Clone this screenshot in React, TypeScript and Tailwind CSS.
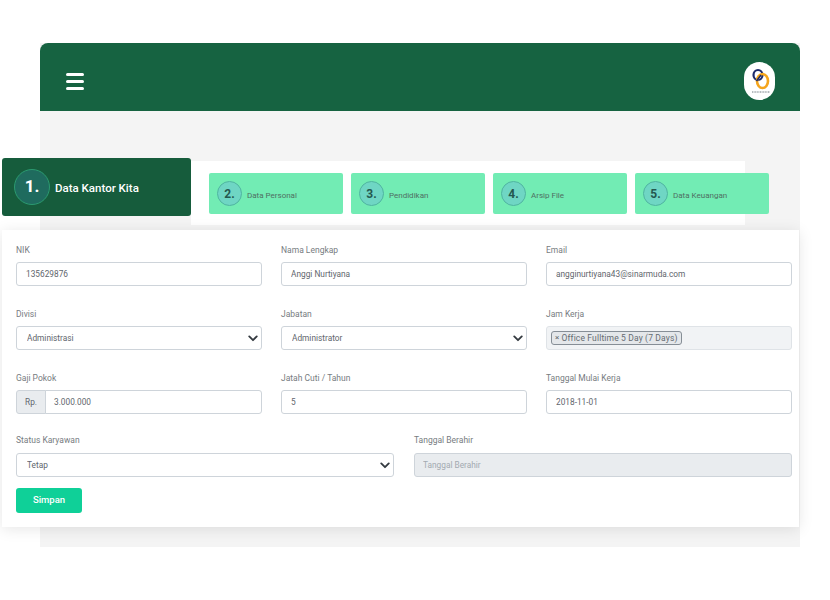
const FONT = "font-['Roboto','Liberation_Sans',sans-serif]";

const fieldClass =
  "block w-full h-6 rounded-[3px] border border-[#ced4da] bg-white px-[9px] text-[8.3px] text-[#5f666d] outline-none";

function Label({ children, tall }: { children: React.ReactNode; tall?: boolean }) {
  return (
    <label className={`block h-3 text-[8.5px] leading-3 text-[#777c81] ${tall ? "mb-[7px]" : "mb-[6px]"}`}>
      {children}
    </label>
  );
}

function TextField({ label, value }: { label: string; value: string }) {
  return (
    <div>
      <Label>{label}</Label>
      <input readOnly value={value} className={fieldClass} />
    </div>
  );
}

function SelectField({ label, value, tall }: { label: string; value: string; tall?: boolean }) {
  return (
    <div>
      <Label tall={tall}>{label}</Label>
      <div className="relative">
        <select className={`${fieldClass} appearance-none !px-[10px]`} defaultValue={value}>
          <option>{value}</option>
        </select>
        <svg
          viewBox="0 0 12 8"
          className="absolute right-[4px] top-[9px] h-[7px] w-[10px]"
          fill="none"
          stroke="#343a40"
          strokeWidth="2.2"
          strokeLinecap="round"
          strokeLinejoin="round"
        >
          <path d="M1.5 1.5 6 6l4.5-4.5" />
        </svg>
      </div>
    </div>
  );
}

function Logo() {
  return (
    <div className="flex h-[38px] w-[31px] items-center justify-center rounded-full bg-white">
      <svg viewBox="0 0 31 38" className="h-[38px] w-[31px]" fill="none">
        <ellipse cx="14" cy="13" rx="4.5" ry="5" stroke="#1c2a6b" strokeWidth="2.2" />
        <ellipse cx="18.5" cy="19" rx="5.5" ry="7" stroke="#f5a51c" strokeWidth="2.6" />
        <path d="M12.5 19l4.5-6" stroke="#1c2a6b" strokeWidth="1.6" />
        <path d="M8 30h18" stroke="#4a5560" strokeWidth="0.8" strokeDasharray="1 0.6" />
      </svg>
    </div>
  );
}

function Step({ no, title }: { no: string; title: string }) {
  return (
    <div className="flex h-[41px] w-[134px] shrink-0 items-center rounded-[2px] bg-[#72ecb4] pl-[8px]">
      <div className="flex h-[25px] w-[25px] items-center justify-center rounded-full border border-[#4fb5a0] bg-[#6fd6c4] text-[12px] font-bold text-[#24584f]">
        {no}
      </div>
      <span className="ml-[5px] mt-[4px] text-[8px] text-[#4f6f63]">{title}</span>
    </div>
  );
}

export default function App() {
  return (
    <div className={`${FONT} h-[600px] w-[830px] overflow-hidden bg-white pt-[43px]`}>
      <div className="ml-[40px] h-[504px] w-[760px] bg-[#f4f4f4]">
        <header className="flex h-[68px] items-center justify-between rounded-t-[8px] bg-[#166341] pl-[26px] pr-[25px] pt-[8px]">
          <div className="flex w-[18px] flex-col gap-[4px]">
            <span className="h-[3px] rounded-full bg-white" />
            <span className="h-[3px] rounded-full bg-white" />
            <span className="h-[3px] rounded-full bg-white" />
          </div>
          <Logo />
        </header>

        <div className="-ml-[38px] mt-[47px] flex items-start">
          <div className="relative z-10 flex h-[58px] w-[189px] shrink-0 items-center rounded-[3px] bg-[#165c3c] pl-[12px]">
            <div className="flex h-[36px] w-[36px] items-center justify-center rounded-full border border-[#2b9a70] bg-[#1f6b5e] text-[17px] font-bold text-white">
              1.
            </div>
            <span className="ml-[5px] mt-[3px] text-[11.5px] font-medium text-white">Data Kantor Kita</span>
          </div>
          <div className="mt-[3px] flex h-[64px] w-[554px] gap-[8px] bg-white pl-[18px] pt-[12px]">
            <Step no="2." title="Data Personal" />
            <Step no="3." title="Pendidikan" />
            <Step no="4." title="Arsip File" />
            <Step no="5." title="Data Keuangan" />
          </div>
        </div>

        <form className="relative -ml-[38px] mt-[5px] h-[297px] w-[797px] bg-white pl-[14px] pr-[7px] pt-[14px] shadow-[0_2px_14px_rgba(0,0,0,0.1)]">
          <div className="grid grid-cols-3 gap-x-[19px] gap-y-[22px]">
            <TextField label="NIK" value="135629876" />
            <TextField label="Nama Lengkap" value="Anggi Nurtiyana" />
            <TextField label="Email" value="angginurtiyana43@sinarmuda.com" />
            <SelectField label="Divisi" value="Administrasi" />
            <SelectField label="Jabatan" value="Administrator" />
            <div>
              <Label>Jam Kerja</Label>
              <div className="flex h-6 items-center rounded-[3px] border border-[#dfe3e7] bg-[#f1f3f5] px-[4px]">
                <span className="flex h-[14px] items-center rounded-[3px] border border-[#868e96] bg-[#e4e7ea] px-[3px] text-[8.5px] tracking-[0.15px] text-[#646b71]">
                  <span className="mr-[2px] text-[8px]">×</span>Office Fulltime 5 Day (7 Days)
                </span>
              </div>
            </div>
            <div>
              <Label>Gaji Pokok</Label>
              <div className="flex h-6">
                <span className="flex w-[30px] items-center justify-center rounded-l-[3px] border border-[#ced4da] bg-[#e9ecef] text-[8.3px] text-[#5f666d]">
                  Rp.
                </span>
                <input
                  readOnly
                  value="3.000.000"
                  className="-ml-px block min-w-0 flex-1 rounded-r-[3px] border border-[#ced4da] bg-white px-[8px] text-[8.3px] text-[#5f666d] outline-none"
                />
              </div>
            </div>
            <TextField label="Jatah Cuti / Tahun" value="5" />
            <TextField label="Tanggal Mulai Kerja" value="2018-11-01" />
          </div>

          <div className="mt-[20px] grid grid-cols-2 gap-x-[20px]">
            <SelectField label="Status Karyawan" value="Tetap" tall />
            <div>
              <Label tall>Tanggal Berahir</Label>
              <input
                readOnly
                placeholder="Tanggal Berahir"
                className="block h-6 w-full rounded-[3px] border border-[#ced4da] bg-[#e9ecef] px-[8px] text-[8.3px] outline-none placeholder:text-[#a3aab1]"
              />
            </div>
          </div>

          <button
            type="button"
            className="mt-[11px] block h-[25px] w-[66px] rounded-[3px] bg-[#0fd098] text-[9.5px] font-medium text-white"
          >
            Simpan
          </button>
        </form>
      </div>
    </div>
  );
}
